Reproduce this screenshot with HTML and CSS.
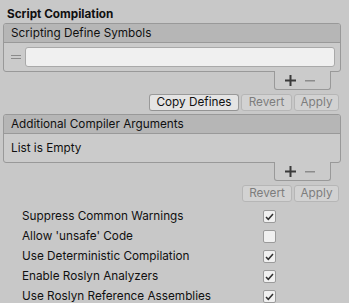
FILE: index.html
```html
<!DOCTYPE html>
<html>
<head>
<meta charset="utf-8">
<link rel="stylesheet" href="styles.css">
</head>
<body>
<div class="title">Script Compilation</div>

<div class="list">
  <div class="list-head">Scripting Define Symbols</div>
  <div class="list-body row-input">
    <span class="handle"><svg width="10" height="6" viewBox="0 0 10 6"><rect x="0" y="1" width="10" height="1" fill="#8a8a8a"/><rect x="0" y="4" width="10" height="1" fill="#8a8a8a"/></svg></span>
    <div class="field"></div>
  </div>
</div>
<div class="tabrow">
  <div class="tab">
    <svg class="plus" width="11" height="11" viewBox="0 0 11 11"><rect x="0" y="4.5" width="11" height="2" fill="#3a3a3a"/><rect x="4.5" y="0" width="2" height="11" fill="#3a3a3a"/></svg>
    <svg class="minus" width="10" height="11" viewBox="0 0 10 11"><rect x="0" y="5" width="10" height="1.5" fill="#8c8c8c"/></svg>
  </div>
</div>
<div class="btnrow first">
  <button class="btn">Copy Defines</button>
  <button class="btn off w-revert">Revert</button>
  <button class="btn off w-apply">Apply</button>
</div>

<div class="list second">
  <div class="list-head">Additional Compiler Arguments</div>
  <div class="list-body empty">List is Empty</div>
</div>
<div class="tabrow">
  <div class="tab">
    <svg class="plus" width="11" height="11" viewBox="0 0 11 11"><rect x="0" y="4.5" width="11" height="2" fill="#3a3a3a"/><rect x="4.5" y="0" width="2" height="11" fill="#3a3a3a"/></svg>
    <svg class="minus" width="10" height="11" viewBox="0 0 10 11"><rect x="0" y="5" width="10" height="1.5" fill="#8c8c8c"/></svg>
  </div>
</div>
<div class="btnrow second-row">
  <button class="btn off w-revert2">Revert</button>
  <button class="btn off w-apply">Apply</button>
</div>

<div class="opts">
  <div class="opt"><span class="lbl">Suppress Common Warnings</span><span class="cb on"><svg width="11" height="11" viewBox="0 0 11 11"><path d="M2 6 L4.3 8.3 L9 3" fill="none" stroke="#303030" stroke-width="1.5"/></svg></span></div>
  <div class="opt"><span class="lbl">Allow 'unsafe' Code</span><span class="cb"></span></div>
  <div class="opt"><span class="lbl">Use Deterministic Compilation</span><span class="cb on"><svg width="11" height="11" viewBox="0 0 11 11"><path d="M2 6 L4.3 8.3 L9 3" fill="none" stroke="#303030" stroke-width="1.5"/></svg></span></div>
  <div class="opt"><span class="lbl">Enable Roslyn Analyzers</span><span class="cb on"><svg width="11" height="11" viewBox="0 0 11 11"><path d="M2 6 L4.3 8.3 L9 3" fill="none" stroke="#303030" stroke-width="1.5"/></svg></span></div>
  <div class="opt"><span class="lbl">Use Roslyn Reference Assemblies</span><span class="cb on"><svg width="11" height="11" viewBox="0 0 11 11"><path d="M2 6 L4.3 8.3 L9 3" fill="none" stroke="#303030" stroke-width="1.5"/></svg></span></div>
</div>
</body>
</html>
```
FILE: styles.css
```css
* { box-sizing: border-box; }
html, body {
  margin: 0;
  padding: 0;
  background: #c8c8c8;
  width: 349px;
  height: 303px;
  overflow: hidden;
}
body {
  font-family: Inter, "Noto Sans", sans-serif;
  font-size: 11.75px;
  color: #101010;
}
.title {
  font-weight: 700;
  height: 23px;
  line-height: 16px;
  padding: 6px 0 0 7px;
}
.list {
  margin: 0 8px 0 3px;
  border: 1px solid #999999;
  border-radius: 3px;
  background: #cbcbcb;
  position: relative;
}
.list-head {
  height: 19px;
  line-height: 18px;
  padding-left: 7px;
  background: #b6b6b6;
  border-bottom: 1px solid #999999;
  border-radius: 2px 2px 0 0;
}
.row-input {
  display: flex;
  align-items: center;
  height: 28px;
  padding: 0 5px 0 0;
}
.handle {
  width: 21px;
  display: flex;
  justify-content: center;
  padding-left: 2px;
}
.field {
  flex: 1;
  height: 20px;
  background: #f0f0f0;
  border: 1px solid #a9a9a9;
  border-radius: 3px;
}
.empty {
  height: 28px;
  line-height: 28px;
  padding-left: 7px;
}
.tabrow {
  display: flex;
  justify-content: flex-end;
  padding-right: 18px;
  margin-top: -1px;
  position: relative;
}
.tab {
  width: 57px;
  height: 19px;
  background: #cbcbcb;
  border: 1px solid #999999;
  border-top: none;
  border-radius: 0 0 3px 3px;
  display: flex;
  align-items: center;
  padding-left: 10px;
  gap: 9px;
}
.tab svg { display: block; }
.btnrow {
  display: flex;
  justify-content: flex-end;
  gap: 2px;
  padding-right: 10px;
}
.btnrow.first { margin-top: 4px; height: 17px; }
.btnrow.second-row { margin-top: 4px; height: 17px; }
.btn {
  font-family: Inter, "Noto Sans", sans-serif;
  font-size: 11.75px;
  height: 17px;
  padding: 0;
  margin: 0;
  line-height: 15px;
  border: 1px solid #999999;
  border-bottom-color: #939393;
  border-radius: 3px;
  background: #e4e4e4;
  color: #101010;
  width: 90px;
}
.btn.off {
  background: #d2d2d2;
  border-color: #b6b6b6;
  color: #7d7d7d;
}
.w-revert { width: 51px; }
.w-revert2 { width: 50px; }
.w-apply { width: 45px; }
.list.second { margin-top: 3px; }
.opts {
  margin-top: 4px;
  padding-left: 22px;
}
.opt {
  display: flex;
  align-items: center;
  height: 20px;
}
.lbl {
  width: 241px;
  line-height: 20px;
}
.cb {
  width: 13px;
  height: 13px;
  border: 1px solid #9a9a9a;
  border-radius: 2px;
  background: #f0f0f0;
  display: flex;
  align-items: center;
  justify-content: center;
}
.cb svg { display: block; }
```
